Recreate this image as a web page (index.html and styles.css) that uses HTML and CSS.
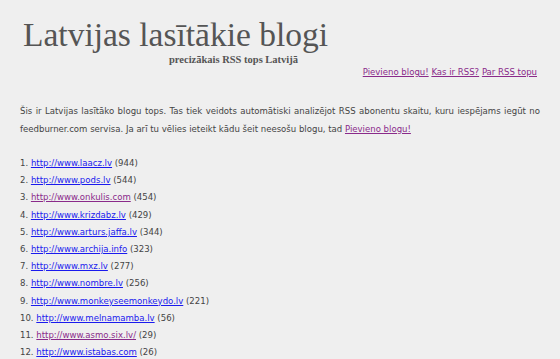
FILE: index.html
```html
<!DOCTYPE html>
<html lang="lv">
<head>
    <meta charset="UTF-8">
    <title>Latvijas lasītākie blogi</title>
    <link rel="stylesheet" href="styles.css">
</head>
<body>
    <div class="header">
        <h1>Latvijas lasītākie blogi</h1>
        <div class="slogan">precizākais RSS tops Latvijā</div>
    </div>

    <div class="menu">
        <a href="#add" class="visited">Pievieno blogu!</a>
        <a href="#rss" class="visited">Kas ir RSS?</a>
        <a href="#about" class="visited">Par RSS topu</a>
    </div>

    <p class="intro">
        Šis ir Latvijas lasītāko blogu tops. Tas tiek veidots automātiski analizējot RSS abonentu skaitu, kuru iespējams iegūt no feedburner.com servisa. Ja arī tu vēlies ieteikt kādu šeit neesošu blogu, tad <a href="#add" class="visited">Pievieno blogu!</a>
    </p>

    <ol class="top">
        <li><a href="#">http://www.laacz.lv</a> (944)</li>
        <li><a href="#">http://www.pods.lv</a> (544)</li>
        <li><a href="#" class="visited">http://www.onkulis.com</a> (454)</li>
        <li><a href="#">http://www.krizdabz.lv</a> (429)</li>
        <li><a href="#">http://www.arturs.jaffa.lv</a> (344)</li>
        <li><a href="#">http://www.archija.info</a> (323)</li>
        <li><a href="#">http://www.mxz.lv</a> (277)</li>
        <li><a href="#">http://www.nombre.lv</a> (256)</li>
        <li><a href="#">http://www.monkeyseemonkeydo.lv</a> (221)</li>
        <li><a href="#">http://www.melnamamba.lv</a> (56)</li>
        <li><a href="#" class="visited">http://www.asmo.six.lv/</a> (29)</li>
        <li><a href="#">http://www.istabas.com</a> (26)</li>
    </ol>
</body>
</html>
```

FILE: styles.css
```css
body {
    margin: 0;
    padding: 0 20px;
    background-color: #efefef;
    color: #444;
    font-family: "DejaVu Sans Condensed", "DejaVu Sans", Verdana, sans-serif;
    font-size: 9.5px;
}
a {
    color: #1a1aee;
}
a.visited {
    color: #8a2a8a;
}
.header {
    padding-top: 17px;
    padding-left: 3px;
}
h1 {
    margin: 0;
    font-family: "Liberation Serif", Georgia, serif;
    font-weight: normal;
    font-size: 33.5px;
    line-height: 36px;
    color: #555;
}
.slogan {
    margin: 1px 0 0 146px;
    font-family: "Liberation Serif", Georgia, serif;
    font-weight: bold;
    font-size: 10.5px;
    line-height: 11px;
    color: #555;
}
.menu {
    margin-top: 1px;
    text-align: right;
    padding-right: 3px;
}
.intro {
    margin: 25px 0 0;
    line-height: 18px;
    text-align: justify;
}
.top {
    margin: 16px 0 0;
    padding: 0;
    list-style-position: inside;
}
.top li {
    line-height: 17.2px;
}
```
